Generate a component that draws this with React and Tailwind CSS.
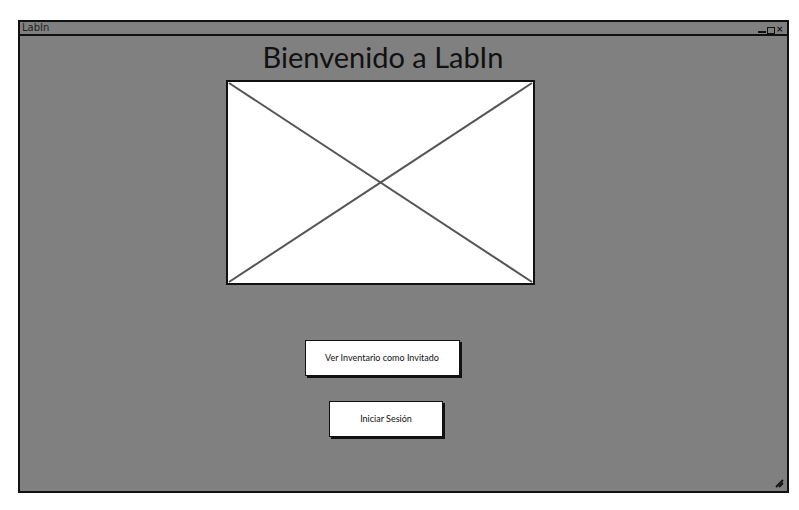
// LabIn welcome screen - wireframe mockup
export default function App() {
  const font = { fontFamily: '"Lato", "Liberation Sans", sans-serif' };

  return (
    <div className="w-[799px] h-[510px] bg-white pt-[20px] pl-[18px]" style={font}>
      {/* Window */}
      <div className="w-[771px] h-[473px] border-2 border-[#111] bg-[#808080] flex flex-col">
        {/* Title bar */}
        <div className="h-[14px] border-b-2 border-[#111] flex items-center justify-between px-[2px]">
          <span className="text-[10px] leading-none text-[#222]" style={{ fontFamily: '"DejaVu Sans", sans-serif' }}>
            LabIn
          </span>
          <div className="flex items-end gap-[1px] pr-[2px]">
            <div className="w-[8px] h-[2px] bg-[#111] mb-[1px]" />
            <div className="w-[8px] h-[7px] border-[1.5px] border-[#111]" />
            <span className="text-[11px] font-bold leading-none text-[#111] ml-[1px]">×</span>
          </div>
        </div>

        {/* Content */}
        <div className="flex-1 relative">
          <div className="ml-[205px] w-[310px] flex flex-col items-center">
            <h1 className="text-[29px] leading-none text-[#111] mt-[6px] ml-[6px]">Bienvenido a LabIn</h1>

            {/* Image placeholder */}
            <div className="mt-[9px] w-[309px] h-[205px] bg-white border-2 border-[#111]">
              <svg width="305" height="201" viewBox="0 0 305 201" className="block">
                <line x1="1" y1="1" x2="304" y2="200" stroke="#555" strokeWidth="2" />
                <line x1="304" y1="1" x2="1" y2="200" stroke="#555" strokeWidth="2" />
              </svg>
            </div>

            <button className="mt-[55px] w-[155px] h-[36px] bg-white border border-[#111] shadow-[2px_2px_0_#111] text-[9px] text-[#111] ml-[4px]">
              Ver Inventario como Invitado
            </button>
            <button className="mt-[25px] w-[114px] h-[36px] bg-white border border-[#111] shadow-[2px_2px_0_#111] text-[9px] text-[#111] ml-[12px]">
              Iniciar Sesión
            </button>
          </div>

          {/* Resize grip */}
          <svg width="9" height="9" viewBox="0 0 9 9" className="absolute right-[3px] bottom-[3px]">
            <line x1="1" y1="8" x2="8" y2="1" stroke="#111" strokeWidth="1.8" />
            <line x1="4" y1="8" x2="8" y2="4" stroke="#111" strokeWidth="1.8" />
          </svg>
        </div>
      </div>
    </div>
  );
}
